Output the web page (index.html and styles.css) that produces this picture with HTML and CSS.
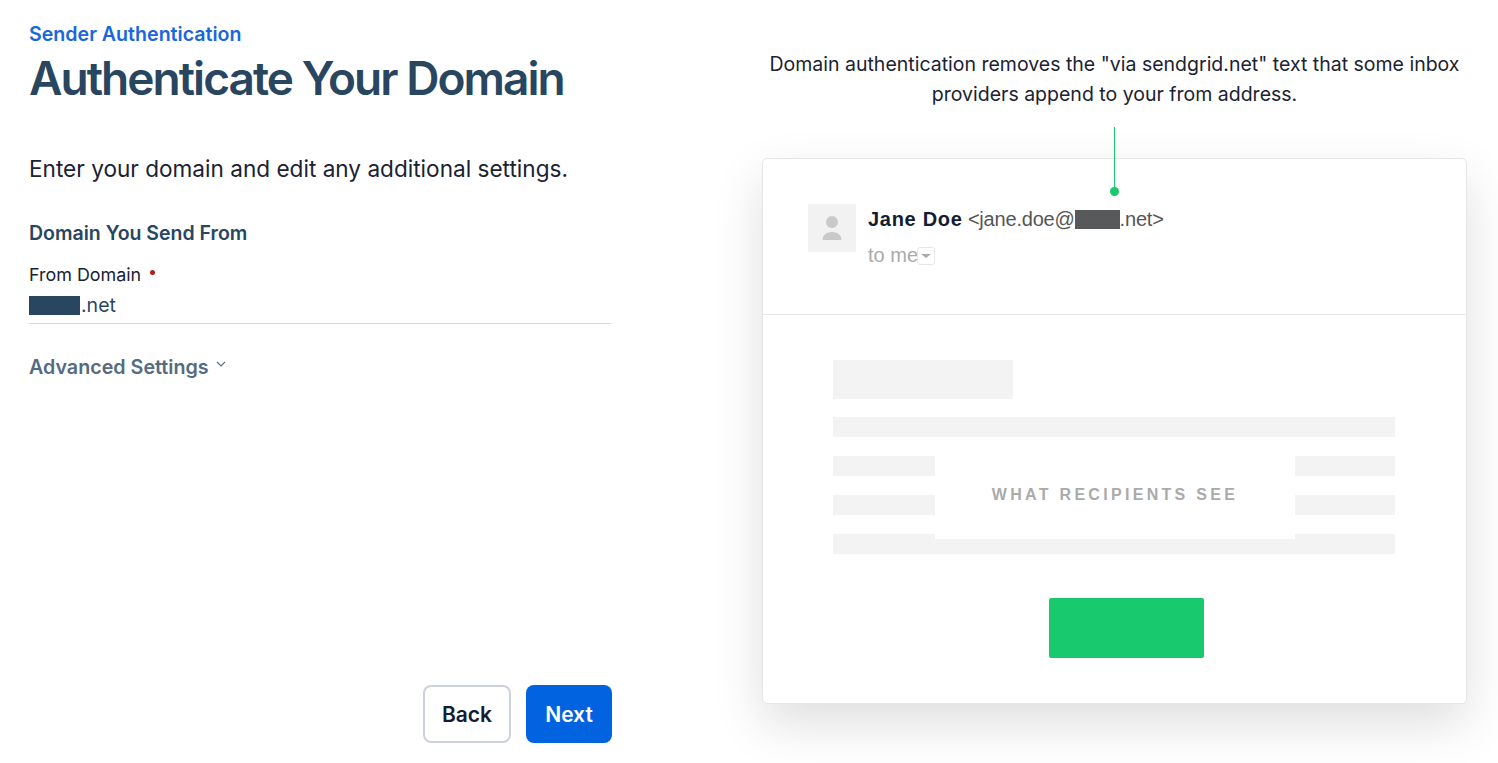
FILE: index.html
```html
<!DOCTYPE html>
<html lang="en">
<head>
    <meta charset="UTF-8" />
    <meta name="viewport" content="width=device-width, initial-scale=1" />
    <title>Authenticate Your Domain</title>
    <link rel="stylesheet" href="styles.css">
</head>
<body>
    <div class="page">
        <main class="setup">
            <div class="setup-top">
                <div class="eyebrow">Sender Authentication</div>
                <h1 class="title">Authenticate Your Domain</h1>
                <p class="intro">Enter your domain and edit any additional settings.</p>
                <h2 class="section-title">Domain You Send From</h2>
                <label class="field-label">From Domain <span class="required"></span></label>
                <div class="field-value"><span class="redact-blue"></span>.net</div>
                <div class="advanced">
                    Advanced Settings
                    <svg class="chevron" xmlns="http://www.w3.org/2000/svg" viewBox="0 0 10 6" width="10" height="6" fill="none">
                        <path d="M1 1l4 4 4-4" stroke="#546b81" stroke-width="1.1"/>
                    </svg>
                </div>
            </div>
            <div class="actions">
                <button class="btn btn-back">Back</button>
                <button class="btn btn-next">Next</button>
            </div>
        </main>
        <aside class="preview">
            <p class="preview-note">Domain authentication removes the "via sendgrid.net" text that some inbox providers append to your from address.</p>
            <div class="email-card">
                <div class="callout-line"></div>
                <div class="callout-dot"></div>
                <div class="email-head">
                    <div class="avatar">
                        <svg xmlns="http://www.w3.org/2000/svg" viewBox="0 0 20 24" width="20" height="24" fill="#c9c9c9">
                            <circle cx="10" cy="6" r="6"/>
                            <path d="M0.500 24c0-5 4-8 9.500-8s9.500 3 9.500 8z"/>
                        </svg>
                    </div>
                    <div class="sender">
                        <div class="sender-line"><strong class="sender-name">Jane Doe</strong> &lt;jane.doe@<span class="redact-gray"></span>.net&gt;</div>
                        <div class="to-line">to me<span class="to-caret"><span class="caret"></span></span></div>
                    </div>
                </div>
                <div class="email-body">
                    <div class="bar bar-heading"></div>
                    <div class="bar"></div>
                    <div class="bar"></div>
                    <div class="bar"></div>
                    <div class="bar"></div>
                    <div class="recipients-label">WHAT RECIPIENTS SEE</div>
                    <div class="email-cta"></div>
                </div>
            </div>
        </aside>
    </div>
</body>
</html>
```

FILE: styles.css
```css
html, body {
    height: 100%;
}
body {
    margin: 0;
    background: #fff;
    font-family: Inter, "Liberation Sans", sans-serif;
    color: #1a2233;
    overflow: hidden;
}
.page {
    display: flex;
    height: 763px;
    padding-left: 29px;
    box-sizing: border-box;
}
.setup {
    width: 583px;
    display: flex;
    flex-direction: column;
    justify-content: space-between;
    padding: 22px 0 20px;
    box-sizing: border-box;
}
.eyebrow {
    color: #1a66e0;
    font-size: 19.6px;
    font-weight: 600;
    line-height: 24px;
}
.title {
    margin: 0;
    color: #294661;
    font-size: 46px;
    font-weight: 600;
    line-height: 64px;
    letter-spacing: -1.95px;
}
.intro {
    margin: 42px 0 0;
    font-size: 22.6px;
    line-height: 34px;
}
.section-title {
    margin: 35px 0 0;
    color: #294661;
    font-size: 19.5px;
    font-weight: 600;
    line-height: 24px;
}
.field-label {
    display: block;
    margin-top: 18px;
    font-size: 17.9px;
    line-height: 24px;
}
.required {
    display: inline-block;
    width: 5px;
    height: 5px;
    margin: 0 0 6px 4px;
    border-radius: 50%;
    background: #b51c1c;
}
.field-value {
    display: flex;
    align-items: center;
    height: 36px;
    margin-right: 1px;
    border-bottom: 1px solid #d4d8dd;
    color: #294661;
    font-size: 19.5px;
}
.redact-blue {
    width: 51px;
    height: 19px;
    margin-right: 1px;
    background: #294661;
}
.advanced {
    display: flex;
    align-items: center;
    gap: 7px;
    margin-top: 29px;
    color: #546b81;
    font-size: 19.7px;
    font-weight: 600;
    line-height: 28px;
}
.chevron {
    margin-bottom: 6px;
}
.actions {
    display: flex;
    justify-content: flex-end;
    gap: 15px;
}
.btn {
    height: 58px;
    border-radius: 8px;
    box-sizing: border-box;
    font-family: inherit;
    font-size: 21px;
    font-weight: 600;
}
.btn-back {
    width: 88px;
    border: 2px solid #cdd1dc;
    background: #fff;
    color: #121c33;
}
.btn-next {
    width: 86px;
    border: none;
    background: #0263e0;
    color: #fff;
}
.preview {
    margin-left: 150px;
    width: 705px;
    display: flex;
    flex-direction: column;
}
.preview-note {
    margin: 49px -10px 0;
    height: 60px;
    font-size: 19.5px;
    line-height: 30px;
    text-align: center;
    color: #1a2233;
}
.email-card {
    position: relative;
    margin-top: 49px;
    height: 546px;
    box-sizing: border-box;
    border: 1px solid #e6e6e6;
    border-radius: 5px;
    background: #fff;
    box-shadow: 0 20px 50px rgba(0, 0, 0, 0.13);
}
.callout-line {
    position: absolute;
    left: 351px;
    top: -32px;
    width: 1px;
    height: 64px;
    background: #18c96e;
}
.callout-dot {
    position: absolute;
    left: 347px;
    top: 28px;
    width: 9px;
    height: 9px;
    border-radius: 50%;
    background: #18c96e;
}
.email-head {
    display: flex;
    gap: 12px;
    height: 156px;
    padding: 45px 0 0 45px;
    box-sizing: border-box;
    border-bottom: 1px solid #e6e6e6;
}
.avatar {
    display: flex;
    align-items: center;
    justify-content: center;
    width: 48px;
    height: 48px;
    background: #f2f2f2;
}
.sender {
    font-family: "Liberation Sans", Arial, sans-serif;
}
.sender-line {
    display: flex;
    align-items: center;
    height: 30px;
    color: #555;
    font-size: 20px;
    letter-spacing: -0.2px;
    white-space: pre;
}
.sender-name {
    color: #121c33;
    letter-spacing: 0.7px;
}
.redact-gray {
    width: 45px;
    height: 19px;
    background: #58595b;
}
.to-line {
    display: flex;
    align-items: center;
    margin-top: 10px;
    color: #aaa;
    font-size: 20px;
}
.to-caret {
    display: flex;
    align-items: center;
    justify-content: center;
    width: 18px;
    height: 18px;
    margin-left: -1px;
    box-sizing: border-box;
    border: 1px solid #e6e6e6;
    border-radius: 3px;
}
.caret {
    border-top: 4px solid #aaa;
    border-left: 5px solid transparent;
    border-right: 5px solid transparent;
}
.email-body {
    position: relative;
    padding: 45px 71px 0 70px;
}
.bar {
    height: 20px;
    margin-bottom: 19px;
    background: #f3f3f3;
}
.bar-heading {
    width: 180px;
    height: 39px;
    margin-bottom: 18px;
}
.recipients-label {
    position: absolute;
    left: 172px;
    top: 125px;
    width: 360px;
    height: 99px;
    padding-top: 46px;
    box-sizing: border-box;
    background: #fff;
    color: #aaa;
    font-family: "Liberation Sans", Arial, sans-serif;
    font-size: 16px;
    font-weight: 700;
    letter-spacing: 3.3px;
    text-align: center;
}
.email-cta {
    width: 155px;
    height: 60px;
    margin: 44px 0 0 216px;
    border-radius: 2px;
    background: #18c96e;
}
```
